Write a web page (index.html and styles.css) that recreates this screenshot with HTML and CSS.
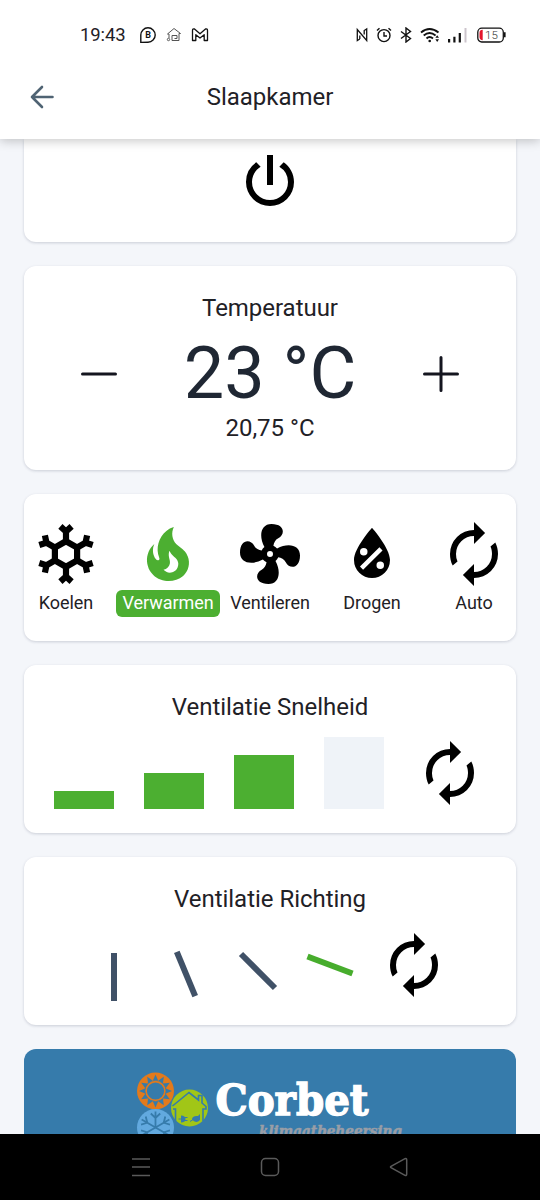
FILE: index.html
```html
<!DOCTYPE html>
<html lang="nl">
<head>
<meta charset="utf-8">
<title>Slaapkamer</title>
<link rel="stylesheet" href="styles.css">
</head>
<body>
<svg class="defs" width="0" height="0" aria-hidden="true">
  <symbol id="auto" viewBox="0 0 24 24"><path d="M12 6v2.700l3.700-3.700L12 1.300V4a8 8 0 0 0-8 8c0 1.400.3 2.700.9 3.850L6.500 14.500A5.870 5.870 0 0 1 6 12a6 6 0 0 1 6-6m7.100 2.150L17.500 9.500c.34.780.5 1.600.5 2.500a6 6 0 0 1-6 6v-2.700l-3.700 3.700 3.700 3.700V20a8 8 0 0 0 8-8c0-1.400-.3-2.700-.9-3.850z"/></symbol>
</svg>
<header class="top">
  <div class="status">
    <div class="status-left">
      <span class="clock">19:43</span>
      <svg width="18" height="18" viewBox="0 0 18 18" fill="none" stroke="#111" stroke-width="1.4"><path d="M1.800 16.400V9a7.200 7.200 0 1 1 7.200 7.200z"/><text x="9" y="12.300" text-anchor="middle" class="b-glyph">B</text></svg>
      <svg width="16" height="16" viewBox="0 0 16 16" fill="none" stroke="#555" stroke-width="1"><path d="M3 11V7H1.500L8 1.500 14.500 6.500H13V13.500H6V8.500H11V11.500H8.500"/><circle cx="2.500" cy="12.500" r="1.200"/></svg>
      <svg width="18" height="16" viewBox="0 0 18 16" fill="none" stroke="#111" stroke-width="1.300" stroke-linejoin="round"><path d="M1.500 13.500V3.500Q1.500 1.500 3.500 2L9 6.800 14.500 2Q16.500 1.500 16.500 3.500V13.500H13.200V7.700L9 11 4.800 7.700V13.500Z"/></svg>
    </div>
    <div class="status-right">
      <svg width="12" height="16" viewBox="0 0 12 16" fill="none" stroke="#111" stroke-width="1.300"><path d="M3.800 12 1.300 13.500V2.500L10.700 13.500V2L8.200 3.500V7.500M3.800 8.500V12"/></svg>
      <svg width="16" height="16" viewBox="0 0 16 16" fill="none" stroke="#111" stroke-width="1.400"><circle cx="8" cy="8.600" r="6"/><path d="M8 5v4h3M1 3.500 3.500 1.200M15 3.500 12.500 1.200"/></svg>
      <svg width="12" height="16" viewBox="0 0 12 16" fill="none" stroke="#111" stroke-width="1.400"><path d="M1 4.500 10.500 11.500 6 15V1L10.500 4.500 1 11.500"/></svg>
      <svg width="22" height="16" viewBox="0 0 22 16" fill="none" stroke="#111" stroke-width="1.900"><path d="M1 5.500Q9.500-1.500 18.500 5.500M3.700 8.500Q9.500 3.500 15.600 8.500M6.500 11.500Q9.500 8.500 13 11.500"/><circle cx="9.700" cy="14" r="1.300" fill="#111" stroke="none"/><path fill="#111" stroke="none" d="M15.400 10.800l1.800-2.600 1.800 2.600zM15.400 12.300h3.600l-1.800 2.600z"/></svg>
      <svg width="20" height="16" viewBox="0 0 20 16" fill="#111"><path d="M0 12h2.200v3.500H0zM5.300 9.800h2.200v5.700H5.300zM10.700 6h2.200v9.500h-2.200z"/><path fill="#ccc5cc" d="M16.500 1h2v14.500h-2z"/></svg>
      <svg width="29" height="16" viewBox="0 0 29 16"><rect x=".8" y="1.200" width="25.500" height="13.800" rx="4" fill="none" stroke="#111" stroke-width="1.300"/><path fill="#111" d="M27 5.300h1.600v5H27z"/><path fill="#e4152b" d="M5.700 2.800V13.200Q2.500 13.200 2.500 9.800V6Q2.500 2.800 5.700 2.800z"/><text x="14.500" y="11.900" text-anchor="middle" class="battery">15</text></svg>
    </div>
  </div>
  <div class="appbar">
    <svg class="back" width="26" height="26" viewBox="0 0 26 26"><path d="M23.500 13H3M13 3 3 13 13 23"/></svg>
    <h1 class="title">Slaapkamer</h1>
  </div>
</header>

<main class="content">
  <section class="card power">
    <svg class="icon" viewBox="0 0 24 24"><path d="M16.560 5.440l-1.450 1.450A5.970 5.970 0 0 1 18 12a6 6 0 0 1-12 0c0-2.170 1.160-4.060 2.880-5.120L7.440 5.440A7.960 7.960 0 0 0 4 12a8 8 0 0 0 16 0c0-2.720-1.360-5.120-3.440-6.560M13 3h-2v10h2z"/></svg>
  </section>

  <section class="card temp">
    <h2 class="title">Temperatuur</h2>
    <div class="setpoint">
      <svg width="36" height="36" viewBox="0 0 36 36" class="step"><path d="M1.500 18h33"/></svg>
      <span class="degrees">23 °C</span>
      <svg width="36" height="36" viewBox="0 0 36 36" class="step"><path d="M1.500 18h33M18 1.500v33"/></svg>
    </div>
    <div class="title measured">20,75 °C</div>
  </section>

  <section class="card modes">
    <div class="mode">
      <svg class="icon" viewBox="-36 -36 72 72" fill="none" stroke="#000" stroke-width="6.200">
        <path d="M0-12.800 11.100-6.400V6.400L0 12.800-11.100 6.400V-6.400Z"/>
        <g id="arm"><path d="M0-12V-25M-5.600-27.600 0-22.500 5.600-27.600"/></g>
        <use href="#arm" transform="rotate(60)"/><use href="#arm" transform="rotate(120)"/><use href="#arm" transform="rotate(180)"/><use href="#arm" transform="rotate(240)"/><use href="#arm" transform="rotate(300)"/>
      </svg>
      <span class="label">Koelen</span>
    </div>
    <div class="mode active">
      <svg class="icon" viewBox="0 0 24 24"><path d="M17.660 11.200c-.23-.3-.51-.56-.77-.82-.67-.6-1.430-1.030-2.070-1.660C13.330 7.260 13 4.850 13.950 3c-.95.23-1.780.75-2.490 1.320-2.590 2.080-3.610 5.750-2.390 8.900.04.1.08.2.08.33 0 .22-.15.42-.35.5-.23.1-.47.04-.66-.12a.58.58 0 0 1-.14-.17c-1.130-1.430-1.310-3.480-.55-5.120C5.780 10 4.870 12.300 5 14.470c.06.5.12 1 .29 1.500.14.6.41 1.200.71 1.730 1.080 1.730 2.950 2.970 4.960 3.220 2.140.27 4.430-.12 6.070-1.600 1.830-1.660 2.470-4.320 1.530-6.600l-.13-.26c-.21-.46-.77-1.260-.77-1.260m-3.160 6.300c-.28.24-.74.5-1.100.6-1.120.4-2.240-.16-2.900-.82 1.190-.28 1.900-1.160 2.110-2.050.17-.8-.15-1.460-.28-2.230-.12-.74-.1-1.370.17-2.060.19.38.39.76.63 1.060.77 1 1.980 1.440 2.240 2.800.04.14.06.28.06.43.03.82-.33 1.720-.93 2.270z"/></svg>
      <span class="label">Verwarmen</span>
    </div>
    <div class="mode">
      <svg class="icon" viewBox="0 0 24 24"><path d="M12 11a1 1 0 0 0 0 2 1 1 0 0 0 0-2m.5-9C17 2 17.110 5.570 14.750 6.750c-1 .47-1.430 1.520-1.620 2.470.48.2.9.51 1.220.91C18.040 8.130 22 8.920 22 12.500c0 4.500-3.570 4.600-4.750 2.230-.5-.99-1.550-1.420-2.500-1.610-.2.480-.51.890-.91 1.230 1.990 3.690 1.200 7.650-2.370 7.650-4.500 0-4.590-3.580-2.230-4.760.98-.49 1.410-1.530 1.610-2.470-.49-.19-.91-.51-1.220-.91C5.960 15.830 2 15.070 2 11.500 2 7 5.560 6.890 6.740 9.240c.5.990 1.550 1.420 2.490 1.610.19-.48.51-.9.910-1.210C8.150 5.960 8.930 2 12.500 2z"/></svg>
      <span class="label">Ventileren</span>
    </div>
    <div class="mode">
      <svg class="icon" viewBox="0 0 24 24"><path fill-rule="evenodd" d="M12 3.250S6 10 6 14a6 6 0 0 0 12 0c0-4-6-10.750-6-10.750m2.470 6.510 1.040 1.040-6.480 6.440-1.040-1.040zM9.250 10a1.250 1.250 0 0 1 0 2.500 1.250 1.250 0 0 1 0-2.500m5.500 4.500a1.250 1.250 0 0 1 0 2.500 1.250 1.250 0 0 1 0-2.500z"/></svg>
      <span class="label">Drogen</span>
    </div>
    <div class="mode">
      <svg class="icon"><use href="#auto"/></svg>
      <span class="label">Auto</span>
    </div>
  </section>

  <section class="card">
    <h2 class="title">Ventilatie Snelheid</h2>
    <div class="row speeds">
      <div class="bar" style="height:18px"></div>
      <div class="bar" style="height:36px"></div>
      <div class="bar" style="height:54px"></div>
      <div class="bar off" style="height:72px"></div>
      <svg class="icon"><use href="#auto"/></svg>
    </div>
  </section>

  <section class="card">
    <h2 class="title">Ventilatie Richting</h2>
    <div class="row directions">
      <svg class="dir" viewBox="0 0 48 72"><path d="M24 24v48"/></svg>
      <svg class="dir" viewBox="0 0 48 72"><path d="M14.800 22.800 33.200 67.200"/></svg>
      <svg class="dir" viewBox="0 0 48 72"><path d="M7 25 41 59"/></svg>
      <svg class="dir on" viewBox="0 0 48 72"><path d="M1.500 27.500 46.500 44.500"/></svg>
      <svg class="icon"><use href="#auto"/></svg>
    </div>
  </section>

  <section class="brand">
    <svg width="492" height="85" viewBox="24 1049 492 85">
      <circle cx="155.500" cy="1091" r="18.500" fill="#e27a1c"/>
      <g fill="#367bab">
        <circle cx="155.500" cy="1091" r="10.800"/>
        <g id="notch"><path id="n1" d="M152.900 1080.500 155.500 1074.500 158.100 1080.500z"/><use href="#n1" transform="rotate(30 155.500 1091)"/><use href="#n1" transform="rotate(60 155.500 1091)"/></g>
        <use href="#notch" transform="rotate(90 155.500 1091)"/><use href="#notch" transform="rotate(180 155.500 1091)"/><use href="#notch" transform="rotate(270 155.500 1091)"/>
      </g>
      <circle cx="155.500" cy="1091" r="9.400" fill="none" stroke="#e27a1c" stroke-width="1.600"/>
      <circle cx="155.500" cy="1127.500" r="18.500" fill="#62a9df"/>
      <g stroke="#367bab" stroke-width="1.800" fill="none">
        <g id="flake"><path d="M155.500 1127.500v-16M150.800 1113.500l4.700 4.500 4.700-4.500"/></g>
        <use href="#flake" transform="rotate(60 155.500 1127.500)"/><use href="#flake" transform="rotate(-60 155.500 1127.500)"/><use href="#flake" transform="rotate(120 155.500 1127.500)"/><use href="#flake" transform="rotate(-120 155.500 1127.500)"/>
      </g>
      <circle cx="189.500" cy="1108" r="18.500" fill="#a1c617"/>
      <path d="M172.500 1106 189 1092.500 198.500 1100V1095.500H202V1103L206 1106.500V1109H203V1121M173 1109H175.500V1121" fill="none" stroke="#367bab" stroke-width="1.600"/>
      <path d="M181 1115.500q4.500 0 4.500 3.500t-4.500 3.500zM192 1119.500q0-4 6-3.500l2-2v6q-4 4-8-.5z" fill="#367bab"/>
      <path d="M178.500 1119h3M185 1117.500h2.500M185 1120.500h2.500M190 1121.500l4-2.500" fill="none" stroke="#367bab" stroke-width="1"/>
      <text x="215.500" y="1115" textLength="153" lengthAdjust="spacingAndGlyphs" class="brand-name">Corbet</text>
      <text x="259" y="1135.500" textLength="143" lengthAdjust="spacingAndGlyphs" class="brand-sub">klimaatbeheersing</text>
    </svg>
  </section>
</main>

<nav class="navbar">
  <svg width="20" height="20" viewBox="0 0 20 20"><path d="M1 2h18M1 10h18M1 18.500h18"/></svg>
  <svg width="20" height="20" viewBox="0 0 20 20"><rect x="1.500" y="1.500" width="17" height="17" rx="4"/></svg>
  <svg width="20" height="20" viewBox="0 0 20 20"><path d="M2 9.300Q1 10 2 10.700L16 18.300Q17.700 19 17.700 17.200V2.800Q17.700 1 16 1.700Z"/></svg>
</nav>
</body>
</html>
```
FILE: styles.css
```css
* { box-sizing: border-box; }
body {
  margin: 0;
  width: 540px;
  height: 1200px;
  overflow: hidden;
  display: flex;
  flex-direction: column;
  background: #f4f6fa;
  color: #1f2126;
  font-family: Roboto, "Noto Sans", sans-serif;
}
.defs { position: absolute; }
svg { display: block; flex: none; }

.top {
  position: relative;
  z-index: 1;
  flex: none;
  height: 139px;
  background: #fff;
  box-shadow: 0 2px 10px rgba(0, 0, 0, .22);
}
.status {
  height: 55px;
  padding: 14px 34px 0 80px;
  display: flex;
  justify-content: space-between;
}
.status-left, .status-right { display: flex; align-items: center; height: 42px; }
.status-left { gap: 9px; }
.clock { width: 50px; margin-top: -1px; font-size: 18.5px; letter-spacing: -.1px; white-space: nowrap; }
.status-right { gap: 8px; }
.status-right svg:nth-child(n+5) { margin-left: -2px; }
.status-right svg:nth-child(6) { margin-left: 1px; }
.b-glyph { font: bold 9px Roboto, sans-serif; fill: #111; stroke: none; }
.battery { font: 300 11.5px Roboto, sans-serif; fill: #333; }
.appbar {
  height: 84px;
  padding: 0 29px;
  display: grid;
  grid-template-columns: 26px 1fr 26px;
  align-items: center;
}
.back { fill: none; stroke: #4f6373; stroke-width: 2.6; stroke-linecap: round; stroke-linejoin: round; }
.title {
  margin: 0;
  font-size: 24px;
  line-height: 36px;
  font-weight: 400;
  letter-spacing: -.03px;
  text-align: center;
}

.content {
  flex: 1;
  min-height: 0;
  overflow: hidden;
  padding: 0 24px;
  display: flex;
  flex-direction: column;
  gap: 24px;
}
.card {
  flex: none;
  padding: 24px 0;
  background: #fff;
  border-radius: 12px;
  box-shadow: 0 1px 3px rgba(40, 50, 80, .2);
}
.icon { width: 72px; height: 72px; }
.power {
  height: 103px;
  padding: 7px 0 0;
  border-radius: 0 0 12px 12px;
  display: flex;
  justify-content: center;
}
.temp { height: 204px; }
.setpoint {
  height: 84px;
  padding: 0 57px;
  display: flex;
  align-items: center;
  justify-content: space-between;
  margin-top: 6px;
}
.step { fill: none; stroke: #14151f; stroke-width: 3; stroke-linecap: round; }
.degrees { font-size: 72px; line-height: 84px; color: #1f2733; white-space: nowrap; }
.measured { margin-top: -6px; }

.modes {
  height: 147px;
  display: grid;
  grid-template-columns: repeat(5, 102px);
  justify-content: center;
}
.mode { display: flex; flex-direction: column; align-items: center; }
.label {
  padding: 0 6px;
  border-radius: 6px;
  font-size: 18px;
  line-height: 26px;
  padding-bottom: 1px;
  letter-spacing: -.05px;
}
.active { fill: #4caf31; }
.active .label { background: #4caf31; color: #fff; }

.row { display: flex; justify-content: center; height: 72px; margin-top: 12px; }
.speeds { gap: 30px; align-items: flex-end; }
.bar { width: 60px; background: #4caf31; }
.bar.off { background: #eff3f8; }
.directions { gap: 24px; }
.dir { width: 48px; height: 72px; fill: none; stroke: #405167; stroke-width: 6; overflow: visible; }
.dir.on { stroke: #47ad2d; }

.brand {
  flex: none;
  height: 120px;
  background: #367bab;
  border-radius: 12px;
  overflow: hidden;
}
.brand-name { font: bold 42px "DejaVu Serif", serif; fill: #fff; stroke: #fff; stroke-width: 1.4; }
.brand-sub { font: italic bold 15px "DejaVu Serif", serif; fill: #9a9ea6; stroke: #9a9ea6; stroke-width: .5; }

.navbar {
  flex: none;
  height: 66px;
  padding: 0 131px;
  background: #000;
  display: flex;
  align-items: center;
  justify-content: space-between;
}
.navbar svg { fill: none; stroke: #5a5a5a; stroke-width: 1.5; }
```
